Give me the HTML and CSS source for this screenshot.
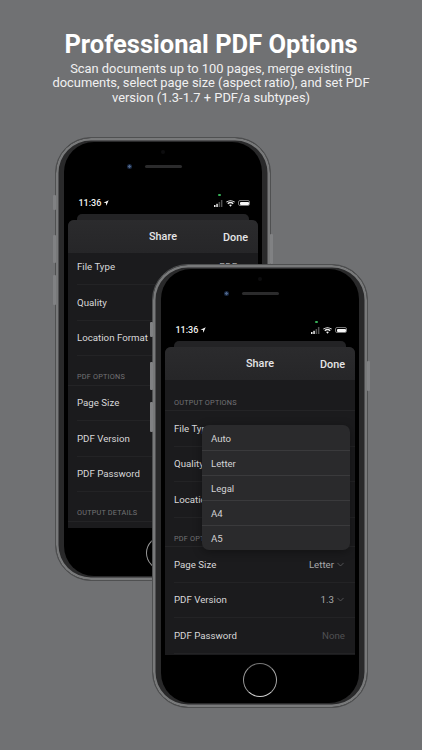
FILE: index.html
```html
<!DOCTYPE html>
<html lang="en">
<head>
<meta charset="utf-8">
<title>Professional PDF Options</title>
<link rel="stylesheet" href="styles.css">
</head>
<body>
<header class="hero">
  <h1>Professional PDF Options</h1>
  <p>Scan documents up to 100 pages, merge existing<br>documents, select page size (aspect ratio), and set PDF<br>version (1.3-1.7 + PDF/a subtypes)</p>
</header>

<div class="phone phone-back">
  <span class="btn btn-mute"></span><span class="btn btn-up"></span><span class="btn btn-down"></span><span class="btn btn-power"></span>
  <div class="screen">
    <div class="sensor"></div>
    <div class="ear"><span class="camera"></span><span class="speaker"></span></div>
    <div class="status">
      <span class="time">11:36 <svg class="loc" viewBox="0 0 10 10"><path d="M9.500.5 .8 4.500l4 .7.7 4.300z"/></svg></span>
      <span class="status-icons">
        <span class="green"></span>
        <svg class="sig" viewBox="0 0 9 7"><rect x="0" y="5" width="1.500" height="2"/><rect x="2.300" y="3.800" width="1.500" height="3.200"/><rect x="4.600" y="2" width="1.500" height="5" opacity=".35"/><rect x="6.900" y="0" width="1.500" height="7" opacity=".35"/></svg>
        <svg class="wifi" viewBox="0 0 10 8"><path d="M5 7.600 3.400 5.800a2.400 2.400 0 0 1 3.200 0zM2.400 4.800a3.900 3.900 0 0 1 5.200 0l1-1.100a5.400 5.400 0 0 0-7.200 0zM.6 2.900a6.400 6.400 0 0 1 8.800 0l.6-.8a7.500 7.500 0 0 0-10 0z"/></svg>
        <span class="battery"><i></i></span>
      </span>
    </div>
    <div class="stack"></div>
    <div class="sheet">
      <div class="sheet-head"><span class="sheet-title">Share</span><span class="done">Done</span></div>
      <div class="list list-scrolled">
        <div class="row"><span>File Type</span><span class="val">PDF <svg class="chev" viewBox="0 0 8 5"><path d="M.5.7 4 4.200 7.500.7"/></svg></span></div>
        <div class="row"><span>Quality</span></div>
        <div class="row"><span>Location Format</span></div>
        <div class="section">PDF OPTIONS</div>
        <div class="row"><span>Page Size</span></div>
        <div class="row"><span>PDF Version</span></div>
        <div class="row"><span>PDF Password</span></div>
        <div class="section">OUTPUT DETAILS</div>
      </div>
    </div>
    <div class="home"></div>
  </div>
</div>

<div class="phone phone-front">
  <span class="btn btn-mute"></span><span class="btn btn-up"></span><span class="btn btn-down"></span><span class="btn btn-power"></span>
  <div class="screen">
    <div class="sensor"></div>
    <div class="ear"><span class="camera"></span><span class="speaker"></span></div>
    <div class="status">
      <span class="time">11:36 <svg class="loc" viewBox="0 0 10 10"><path d="M9.500.5 .8 4.500l4 .7.7 4.300z"/></svg></span>
      <span class="status-icons">
        <span class="green"></span>
        <svg class="sig" viewBox="0 0 9 7"><rect x="0" y="5" width="1.500" height="2"/><rect x="2.300" y="3.800" width="1.500" height="3.200"/><rect x="4.600" y="2" width="1.500" height="5" opacity=".35"/><rect x="6.900" y="0" width="1.500" height="7" opacity=".35"/></svg>
        <svg class="wifi" viewBox="0 0 10 8"><path d="M5 7.600 3.400 5.800a2.400 2.400 0 0 1 3.200 0zM2.400 4.800a3.900 3.900 0 0 1 5.200 0l1-1.100a5.400 5.400 0 0 0-7.200 0zM.6 2.900a6.400 6.400 0 0 1 8.800 0l.6-.8a7.500 7.500 0 0 0-10 0z"/></svg>
        <span class="battery"><i></i></span>
      </span>
    </div>
    <div class="stack"></div>
    <div class="sheet">
      <div class="sheet-head"><span class="sheet-title">Share</span><span class="done">Done</span></div>
      <div class="list">
        <div class="section">OUTPUT OPTIONS</div>
        <div class="row"><span>File Type</span><span class="val">PDF <svg class="chev" viewBox="0 0 8 5"><path d="M.5.7 4 4.200 7.500.7"/></svg></span></div>
        <div class="row"><span>Quality</span></div>
        <div class="row"><span>Location Format</span></div>
        <div class="section">PDF OPTIONS</div>
        <div class="row"><span>Page Size</span><span class="val">Letter <svg class="chev" viewBox="0 0 8 5"><path d="M.5.7 4 4.200 7.500.7"/></svg></span></div>
        <div class="row"><span>PDF Version</span><span class="val">1.3 <svg class="chev" viewBox="0 0 8 5"><path d="M.5.7 4 4.200 7.500.7"/></svg></span></div>
        <div class="row"><span>PDF Password</span><span class="val val-dim">None</span></div>
      </div>
      <ul class="menu">
        <li>Auto</li><li>Letter</li><li>Legal</li><li>A4</li><li>A5</li>
      </ul>
    </div>
    <div class="home"></div>
  </div>
</div>
</body>
</html>
```
FILE: styles.css
```css
* { box-sizing: border-box; }
html, body { margin: 0; height: 100%; }
body {
  position: relative;
  width: 422px;
  height: 750px;
  overflow: hidden;
  background: #707173;
  font-family: Roboto, "Liberation Sans", sans-serif;
  color: #fff;
}
.hero { padding-top: 29px; text-align: center; }
.hero h1 {
  margin: 0;
  font-size: 25.500px;
  line-height: 30px;
  font-weight: 700;
  color: #fff;
}
.hero p {
  margin: 2.500px 0 0;
  font-size: 12.900px;
  line-height: 14.600px;
  color: #f0f0f1;
}

.phone {
  position: absolute;
  width: 216px;
  height: 444px;
  padding: 4px 8px;
  border: 1px solid #4f5051;
  border-radius: 36px;
  background: #29292a;
  box-shadow: inset 0 0 0 2.500px #78797a;
}
.phone-back { left: 55px; top: 137px; }
.phone-front { left: 152px; top: 264px; }

.btn {
  position: absolute;
  width: 3px;
  background: #808183;
  border-radius: 1px;
}
.btn-mute { left: -3px; top: 57px; height: 15px; }
.btn-up { left: -3px; top: 97px; height: 28px; }
.btn-down { left: -3px; top: 137px; height: 30px; }
.btn-power { right: -3px; top: 96px; height: 30px; }

.screen {
  display: flex;
  flex-direction: column;
  height: 100%;
  padding: 0 4px;
  border-radius: 30px;
  background: #000;
  overflow: hidden;
}
.sensor {
  flex: none;
  align-self: center;
  width: 4px;
  height: 4px;
  margin-top: 8px;
  border-radius: 50%;
  background: #0c0c0e;
}
.ear {
  flex: none;
  display: flex;
  justify-content: center;
  align-items: center;
  height: 6px;
  margin-top: 9px;
}
.camera {
  width: 5px;
  height: 5px;
  margin: 0 13px 0 -18px;
  border-radius: 50%;
  background: radial-gradient(circle, #50668a 0 1px, #1a2a44 1.500px);
}
.speaker {
  width: 37px;
  height: 3px;
  border-radius: 2px;
  background: #2b2b2c;
}
.status {
  position: relative;
  flex: none;
  display: flex;
  justify-content: space-between;
  align-items: center;
  height: 12px;
  margin-top: 28px;
  padding: 0 8px 0 10.500px;
  font-size: 9px;
  font-weight: 500;
  color: #f2f2f2;
}
.time { display: flex; align-items: center; gap: 2px; }
.loc { width: 6px; height: 6px; fill: #f2f2f2; }
.status-icons { display: flex; align-items: center; gap: 3px; }
.sig { width: 9px; height: 7px; fill: #eee; }
.wifi { width: 9px; height: 7px; fill: #eee; }
.battery {
  display: block;
  width: 12px;
  height: 6px;
  padding: .5px;
  border: .5px solid #777;
  border-radius: 2px;
}
.battery i { display: block; width: 9px; height: 100%; background: #f6f6f6; border-radius: 1px; }
.green {
  position: absolute;
  right: 37.500px;
  top: -3.500px;
  width: 2.500px;
  height: 2.500px;
  border-radius: 50%;
  background: #36b057;
}
.stack {
  flex: none;
  height: 6px;
  margin: 5px 9px 0;
  border-radius: 5px 5px 0 0;
  background: #232325;
}
.sheet {
  position: relative;
  flex: none;
  height: 308px;
  background: #1b1b1d;
  border-radius: 6px 6px 0 0;
  overflow: hidden;
}
.sheet-head {
  position: relative;
  z-index: 1;
  display: flex;
  justify-content: center;
  align-items: center;
  height: 33px;
  background: linear-gradient(#2b2b2d, #262628);
  font-size: 10.800px;
  font-weight: 500;
  color: #e6e6e7;
}
.done {
  position: absolute;
  right: 10px;
  top: 50%;
  transform: translateY(-50%);
}
.list { padding-top: 1.500px; font-size: 9.700px; color: #d8d8d9; }
.list-scrolled { margin-top: -5px; }
.section {
  height: 29.500px;
  padding: 17px 0 0 9px;
  border-bottom: 1px solid #242426;
  font-size: 7.300px;
  line-height: 8px;
  letter-spacing: .2px;
  color: #737376;
}
.row {
  display: flex;
  justify-content: space-between;
  align-items: center;
  height: 35.500px;
  margin-left: 9px;
  padding-right: 11px;
  border-bottom: 1px solid #232325;
}
.val { display: flex; align-items: center; gap: 3px; color: #a8a8aa; }
.val-dim { color: #505053; margin-right: -1px; }
.chev { width: 7px; height: 5px; fill: none; stroke: #6a6a6d; stroke-width: .8; }
.menu {
  position: absolute;
  left: 37px;
  top: 78px;
  width: 148px;
  margin: 0;
  padding: 0;
  list-style: none;
  border-radius: 7px;
  background: #2a2a2c;
  box-shadow: 0 2px 10px rgba(0,0,0,.35);
  font-size: 9.600px;
  color: #d2d2d3;
  overflow: hidden;
}
.menu li {
  display: flex;
  align-items: center;
  height: 25px;
  padding-left: 9px;
  border-bottom: 1px solid #3a3a3c;
}
.menu li:first-child { height: 26px; padding-top: 1px; }
.menu li:last-child { border-bottom: 0; height: 24px; }
.home {
  flex: none;
  align-self: center;
  width: 34px;
  height: 34px;
  margin-top: 8px;
  border: 1px solid;
  border-color: #777 #aaa #d0d0d0 #999;
  border-radius: 50%;
  background: #000;
}
```
